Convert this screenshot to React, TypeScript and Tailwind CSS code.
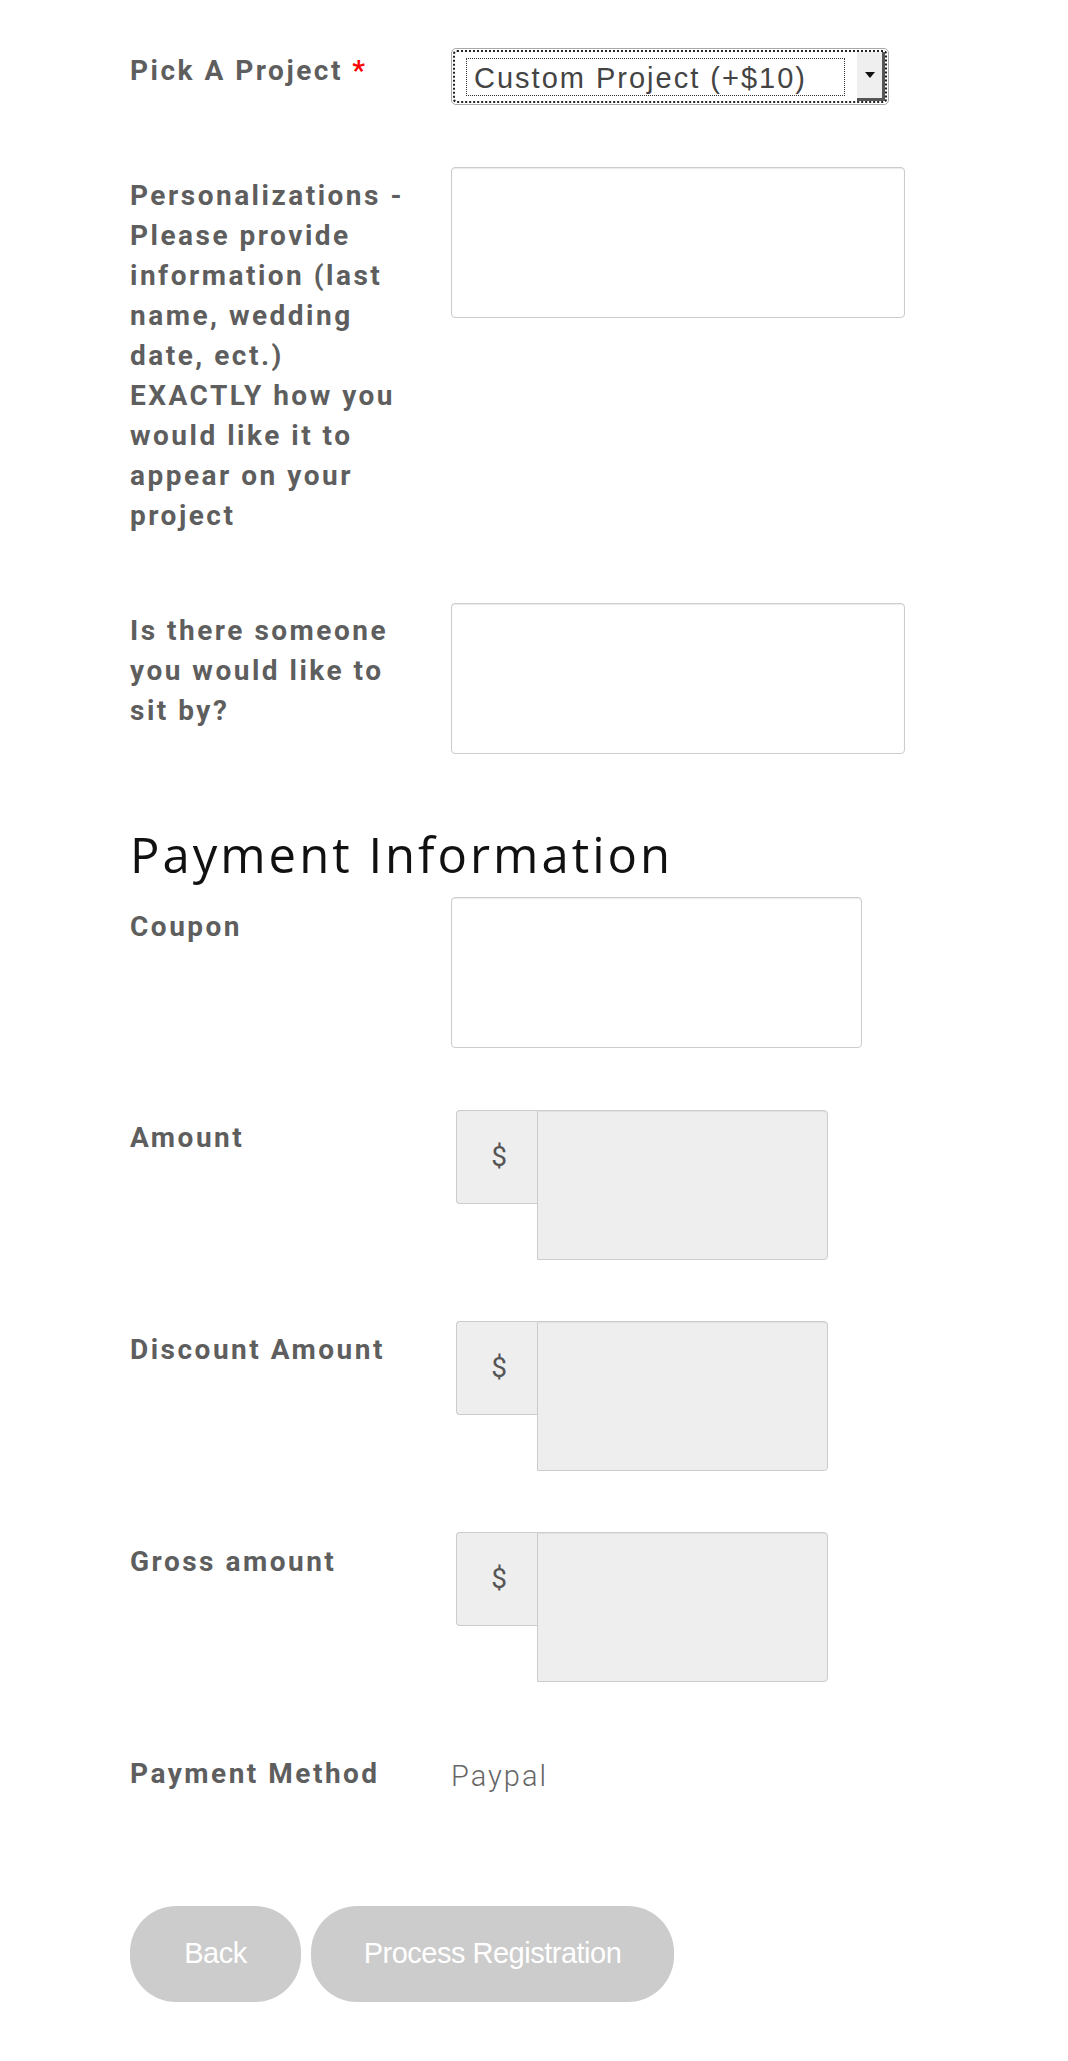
import React from 'react';

const labelCls =
  "w-[321px] shrink-0 pr-[34px] font-['Roboto',sans-serif] font-bold text-[28px] leading-[40px] tracking-[2.5px] text-[#5e5e5e]";

function Label({ children, pt = 'pt-[9px]' }: { children: React.ReactNode; pt?: string }) {
  return <div className={`${labelCls} ${pt}`}>{children}</div>;
}

function TextBox({ w = 'w-[454px]' }: { w?: string }) {
  return (
    <div
      className={`${w} h-[151px] rounded-[4px] border-[1.5px] border-[#cccccc] bg-white shadow-[inset_0_1px_1px_rgba(0,0,0,0.08)]`}
    />
  );
}

function MoneyField() {
  return (
    <div className="flex items-start pl-[5px]">
      <div className="flex h-[94px] w-[81px] items-center justify-center rounded-l-[4px] border-[1.5px] border-r-0 border-[#cccccc] bg-[#eeeeee] pl-[4px] font-['Roboto',sans-serif] text-[28px] text-[#555555]">
        $
      </div>
      <div className="h-[150px] w-[291px] rounded-r-[4px] border-[1.5px] border-[#cccccc] bg-[#eeeeee] shadow-[inset_0_1px_1px_rgba(0,0,0,0.06)]" />
    </div>
  );
}

export default function App() {
  return (
    <div className="min-h-[2061px] w-[1068px] bg-white pl-[130px] pt-[48px] pb-[61px]">
      {/* project select */}
      <div className="flex">
        <Label pt="pt-[3px]">
          Pick A Project <span className="text-[#ff0000]">*</span>
        </Label>
        <div className="h-[57px] w-[438px] rounded-[5px] border border-[#a9a9a9] p-[1px]">
          <div className="flex h-full w-full rounded-[4px] border-2 border-dotted border-[#222222]">
            <div className="flex flex-1 items-center py-[6px] pl-[11px] pr-[12px]">
              <div className="flex h-[38px] w-full items-center border border-dotted border-[#333333] pl-[7px] pt-[4px] font-['Liberation_Sans',Arial,sans-serif] text-[29px] tracking-[2px] text-[#444444]">
                Custom Project (+$10)
              </div>
            </div>
            <div className="flex w-[28px] items-center justify-center border-r-[3px] border-b-[3px] border-[#555555] bg-[#efefef]">
              <svg width="10" height="6" viewBox="0 0 10 6">
                <path d="M0 0h10L5 6z" fill="#111" />
              </svg>
            </div>
          </div>
        </div>
      </div>

      {/* personalizations */}
      <div className="mt-[62px] flex items-start">
        <Label>
          Personalizations - Please provide information (last name, wedding date, ect.) EXACTLY how you would
          like it to appear on your project
        </Label>
        <TextBox />
      </div>

      {/* seat */}
      <div className="mt-[67px] flex items-start">
        <Label pt="pt-[8px]">Is there someone you would like to sit by?</Label>
        <TextBox />
      </div>

      <h2 className="mt-[76px] font-['Open_Sans',sans-serif] text-[49px] font-normal leading-[49px] tracking-[3px] text-[#111111]">
        Payment Information
      </h2>

      <div className="mt-[18px] flex items-start">
        <Label pt="pt-[10px]">Coupon</Label>
        <TextBox w="w-[411px]" />
      </div>

      <div className="mt-[62px] flex items-start">
        <Label pt="pt-[8px]">Amount</Label>
        <MoneyField />
      </div>

      <div className="mt-[61px] flex items-start">
        <Label pt="pt-[9px]">Discount Amount</Label>
        <MoneyField />
      </div>

      <div className="mt-[61px] flex items-start">
        <Label pt="pt-[10px]">Gross amount</Label>
        <MoneyField />
      </div>

      <div className="mt-[72px] flex items-start">
        <Label pt="pt-0">Payment Method</Label>
        <div className="pt-[2px] font-['Roboto',sans-serif] text-[29px] font-light leading-[40px] tracking-[2px] text-[#666666]">
          Paypal
        </div>
      </div>

      <div className="mt-[110px] flex gap-[10px]">
        <button className="h-[96px] w-[171px] rounded-[46px] bg-[#cccccc] font-['Liberation_Sans',Arial,sans-serif] text-[29px] tracking-[-0.5px] text-white">
          Back
        </button>
        <button className="h-[96px] w-[363px] rounded-[46px] bg-[#cccccc] font-['Liberation_Sans',Arial,sans-serif] text-[29px] tracking-[-0.5px] text-white">
          Process Registration
        </button>
      </div>
    </div>
  );
}
